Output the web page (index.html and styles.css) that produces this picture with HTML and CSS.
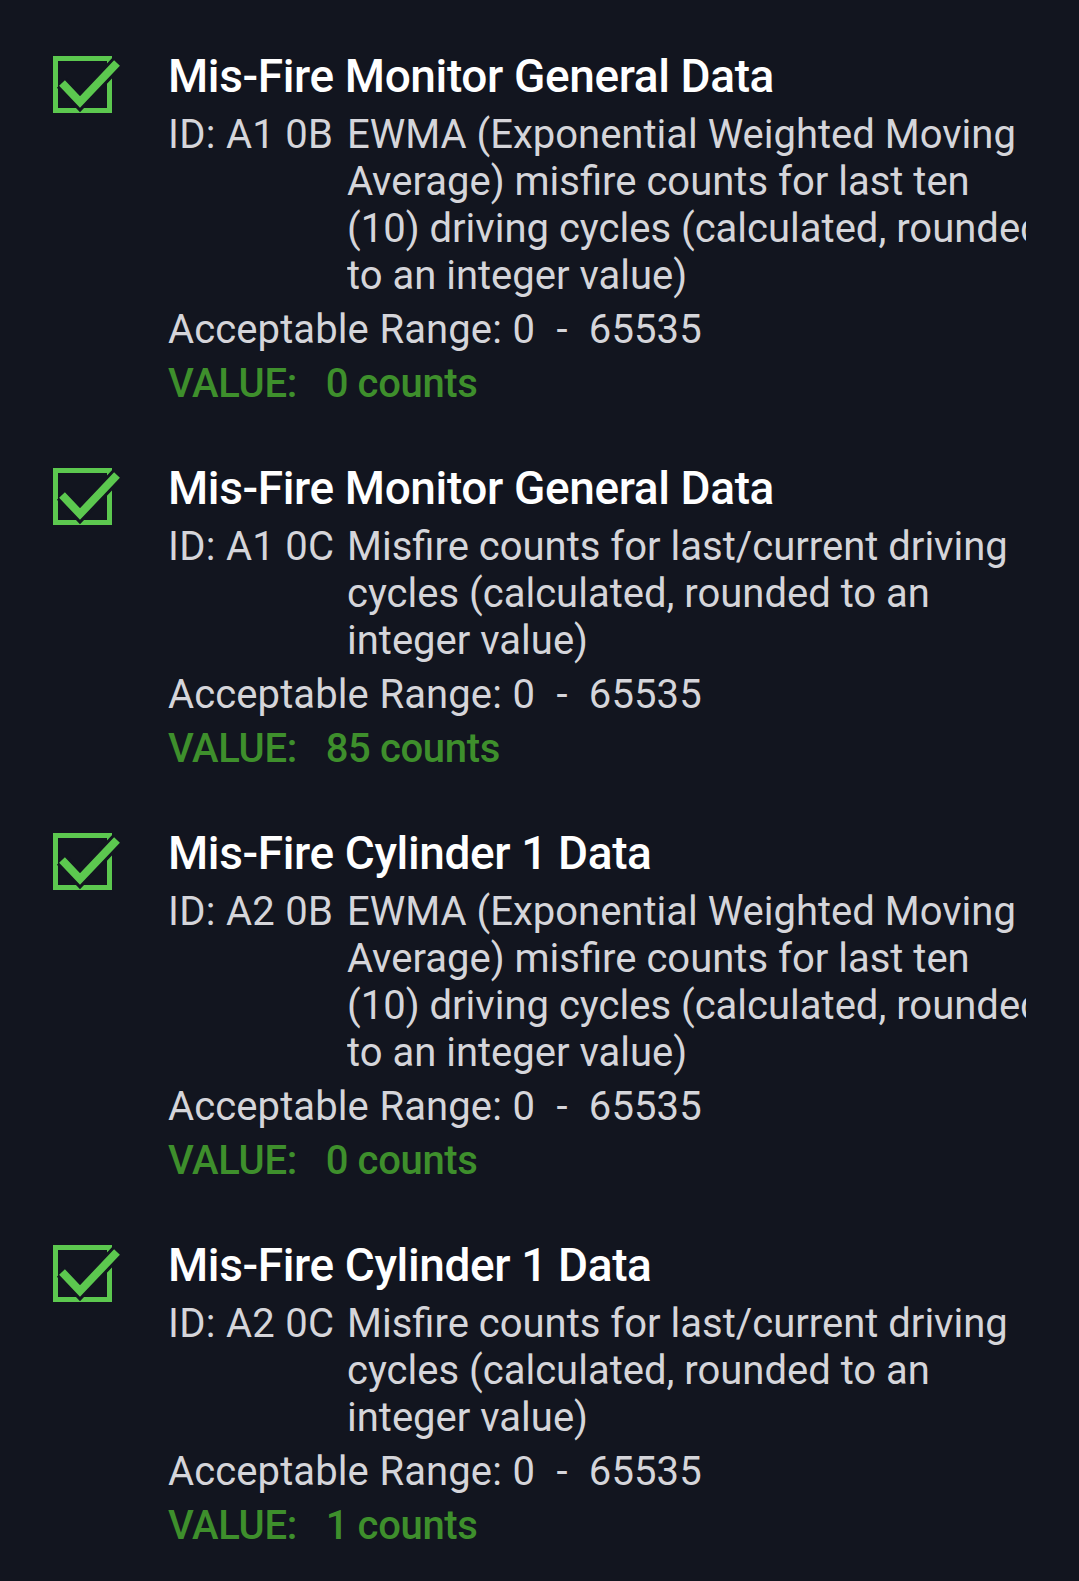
FILE: index.html
```html
<!DOCTYPE html>
<html>
<head>
<meta charset="utf-8">
<link rel="stylesheet" href="styles.css">
</head>
<body>
<div class="list">
  <div class="item">
    <svg class="check" viewBox="0 0 70 64" width="70" height="64"><rect x="5.5" y="6.5" width="54" height="52" fill="none" stroke="#5cc84f" stroke-width="5"/><path d="M12 31 L30 50 L67 11" fill="none" stroke="#12151f" stroke-width="14"/><path d="M12 31 L30 50 L67 11" fill="none" stroke="#5cc84f" stroke-width="8"/></svg>
    <div class="content">
      <div class="title">Mis-Fire Monitor General Data</div>
      <div class="idrow"><span class="label">ID: A1 0B</span><span class="desc">EWMA (Exponential Weighted Moving<br>Average) misfire counts for last ten<br>(10) driving cycles (calculated, rounded<br>to an integer value)</span></div>
      <div class="range">Acceptable Range: 0  -  65535</div>
      <div class="value">VALUE:   0 counts</div>
    </div>
  </div>
  <div class="item">
    <svg class="check" viewBox="0 0 70 64" width="70" height="64"><rect x="5.5" y="6.5" width="54" height="52" fill="none" stroke="#5cc84f" stroke-width="5"/><path d="M12 31 L30 50 L67 11" fill="none" stroke="#12151f" stroke-width="14"/><path d="M12 31 L30 50 L67 11" fill="none" stroke="#5cc84f" stroke-width="8"/></svg>
    <div class="content">
      <div class="title">Mis-Fire Monitor General Data</div>
      <div class="idrow"><span class="label">ID: A1 0C</span><span class="desc">Misfire counts for last/current driving<br>cycles (calculated, rounded to an<br>integer value)</span></div>
      <div class="range">Acceptable Range: 0  -  65535</div>
      <div class="value">VALUE:   85 counts</div>
    </div>
  </div>
  <div class="item">
    <svg class="check" viewBox="0 0 70 64" width="70" height="64"><rect x="5.5" y="6.5" width="54" height="52" fill="none" stroke="#5cc84f" stroke-width="5"/><path d="M12 31 L30 50 L67 11" fill="none" stroke="#12151f" stroke-width="14"/><path d="M12 31 L30 50 L67 11" fill="none" stroke="#5cc84f" stroke-width="8"/></svg>
    <div class="content">
      <div class="title">Mis-Fire Cylinder 1 Data</div>
      <div class="idrow"><span class="label">ID: A2 0B</span><span class="desc">EWMA (Exponential Weighted Moving<br>Average) misfire counts for last ten<br>(10) driving cycles (calculated, rounded<br>to an integer value)</span></div>
      <div class="range">Acceptable Range: 0  -  65535</div>
      <div class="value">VALUE:   0 counts</div>
    </div>
  </div>
  <div class="item">
    <svg class="check" viewBox="0 0 70 64" width="70" height="64"><rect x="5.5" y="6.5" width="54" height="52" fill="none" stroke="#5cc84f" stroke-width="5"/><path d="M12 31 L30 50 L67 11" fill="none" stroke="#12151f" stroke-width="14"/><path d="M12 31 L30 50 L67 11" fill="none" stroke="#5cc84f" stroke-width="8"/></svg>
    <div class="content">
      <div class="title">Mis-Fire Cylinder 1 Data</div>
      <div class="idrow"><span class="label">ID: A2 0C</span><span class="desc">Misfire counts for last/current driving<br>cycles (calculated, rounded to an<br>integer value)</span></div>
      <div class="range">Acceptable Range: 0  -  65535</div>
      <div class="value">VALUE:   1 counts</div>
    </div>
  </div>
</div>
</body>
</html>
```

FILE: styles.css
```css
html, body {
  margin: 0;
  padding: 0;
  background: #12151f;
}
body {
  font-family: Roboto, "Noto Sans", sans-serif;
  width: 1079px;
  height: 1581px;
  overflow: hidden;
}
.list {
  display: flex;
  flex-direction: column;
  gap: 54px;
  padding: 49px 53px 0 50px;
}
.item {
  display: flex;
  align-items: flex-start;
}
.check {
  flex: 0 0 auto;
  margin-top: 3px;
  width: 70px;
  height: 64px;
}
.content {
  flex: 1;
  min-width: 0;
  margin-left: 48px;
  overflow: hidden;
}
.title {
  color: #ffffff;
  font-size: 46px;
  font-weight: 500;
  line-height: 54px;
  letter-spacing: -0.38px;
  white-space: nowrap;
  margin-bottom: 8px;
}
.idrow {
  display: grid;
  grid-template-columns: 179px 1fr;
  color: #d5d5da;
  font-size: 40px;
  line-height: 47px;
}
.label {
  white-space: nowrap;
  letter-spacing: 0.3px;
}
.desc {
  white-space: nowrap;
  overflow: hidden;
}
.range {
  color: #d5d5da;
  font-size: 40px;
  line-height: 47px;
  white-space: pre;
  letter-spacing: 0.1px;
  word-spacing: 0.6px;
  margin-top: 7px;
}
.value {
  color: #3e8f2c;
  font-size: 40px;
  font-weight: 500;
  line-height: 47px;
  white-space: pre;
  letter-spacing: -0.35px;
  margin-top: 7px;
}
```
